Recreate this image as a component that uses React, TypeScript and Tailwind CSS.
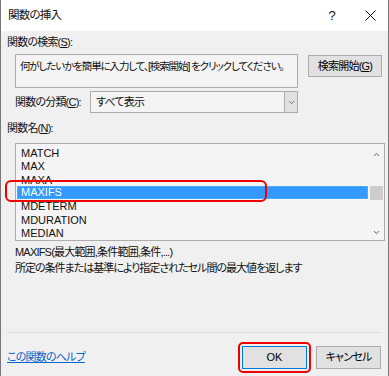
import { ChevronDown, ChevronUp } from 'lucide-react'

const jp = "font-['Liberation_Sans','Noto_Sans_CJK_JP',sans-serif] [font-feature-settings:'palt'] tracking-[-0.8px]"

const items = ['MATCH', 'MAX', 'MAXA', 'MAXIFS', 'MDETERM', 'MDURATION', 'MEDIAN']

function Btn({ children, className = '' }: { children: React.ReactNode; className?: string }) {
  return (
    <div className={`flex items-center justify-center bg-[#e1e1e1] border border-[#adadad] text-black whitespace-nowrap ${className}`}>
      {children}
    </div>
  )
}

export default function App() {
  return (
    <div className={`relative w-[389px] h-[376px] overflow-hidden bg-[#f0f0f0] border-x border-[#777] text-[11px] text-[#111] whitespace-nowrap ${jp}`}>
      {/* title bar */}
      <div className="h-[31px] bg-white flex items-center pl-[7px]">
        <span className="text-[11.5px]">関数の挿入</span>
        <span className="ml-auto w-[16px] text-center text-[13px] tracking-normal">?</span>
        <svg className="ml-[25px] mr-[12px]" width="11" height="11" viewBox="0 0 11 11">
          <path d="M0.5 0.5L10.5 10.5M10.5 0.5L0.5 10.5" stroke="#111" strokeWidth="1" />
        </svg>
      </div>

      <div className="pl-[6px]">
        <div className="mt-[4px] h-[14px] leading-[14px]">
          関数の検索(<u>S</u>):
        </div>

        <div className="flex items-start mt-[5px] pl-[8px]">
          <div className="w-[283px] h-[34px] border border-[#acacac] bg-[#f4f4f4] px-[4px] pt-[3px] leading-[16px] overflow-hidden text-[10.5px] tracking-[-1.1px]">
            何がしたいかを簡単に入力して、[検索開始] をクリックしてください。
          </div>
          <Btn className="ml-[10px] mt-[1px] w-[74px] h-[22px]">
            検索開始(<u>G</u>)
          </Btn>
        </div>

        <div className="flex items-center mt-[3px] pl-[8px]">
          <span className="w-[75px]">
            関数の分類(<u>C</u>):
          </span>
          <div className="flex w-[208px] h-[22px] border border-[#acacac] bg-[#f4f4f4]">
            <span className="flex-1 pl-[5px] leading-[20px]">すべて表示</span>
            <div className="w-[13px] border-l border-[#acacac] bg-[#e1e1e1] flex items-center justify-center">
              <ChevronDown size={9} strokeWidth={2} color="#555" />
            </div>
          </div>
        </div>

        <div className="mt-[8px] h-[14px] leading-[14px]">
          関数名(<u>N</u>):
        </div>

        <div className="ml-[8px] mt-[8px] w-[370px] h-[98px] border border-[#acacac] bg-[#f4f4f4] flex">
          <div className="flex-1 pt-[2px] pl-[1px] text-[11px] tracking-normal">
            {items.map((it) => (
              <div
                key={it}
                className={
                  it === 'MAXIFS'
                    ? 'h-[13.5px] leading-[11.5px] pl-[3px] bg-[#3399ff] text-white border border-dotted border-[#e8a33d]'
                    : 'h-[13.33px] leading-[14px] pl-[4px]'
                }
              >
                {it}
              </div>
            ))}
          </div>
          <div className="w-[16px] flex flex-col items-center">
            <ChevronUp size={9} strokeWidth={2.5} color="#555" className="mt-[6px]" />
            <div className="mt-[27px] w-[13px] h-[14px] bg-[#cdcdcd]" />
            <ChevronDown size={9} strokeWidth={2.5} color="#555" className="mt-auto mb-[3px]" />
          </div>
        </div>

        <div className="pl-[8px] mt-[3px] leading-[16px]">
          <div>MAXIFS(最大範囲,条件範囲,条件,...)</div>
          <div className="tracking-[-1px]">所定の条件または基準により指定されたセル間の最大値を返します</div>
        </div>

        <div className="mt-[56px] mr-[7px] h-px bg-[#dcdcdc]" />

        <div className="flex items-center mt-[13px] pr-[7px]">
          <span className="text-[#0066cc] underline">この関数のヘルプ</span>
          <div className="ml-auto relative">
            <Btn className="w-[65px] h-[23px] !border-[#0078d7] tracking-normal">OK</Btn>
            <div className="absolute -inset-[4px] border-2 border-[#ee0000] rounded-[5px]" />
          </div>
          <Btn className="ml-[9px] w-[65px] h-[23px]">キャンセル</Btn>
        </div>
      </div>

      {/* highlight around selected function */}
      <div className="absolute left-[4px] top-[180px] w-[262px] h-[22px] border-2 border-[#ee0000] rounded-[6px]" />
    </div>
  )
}
